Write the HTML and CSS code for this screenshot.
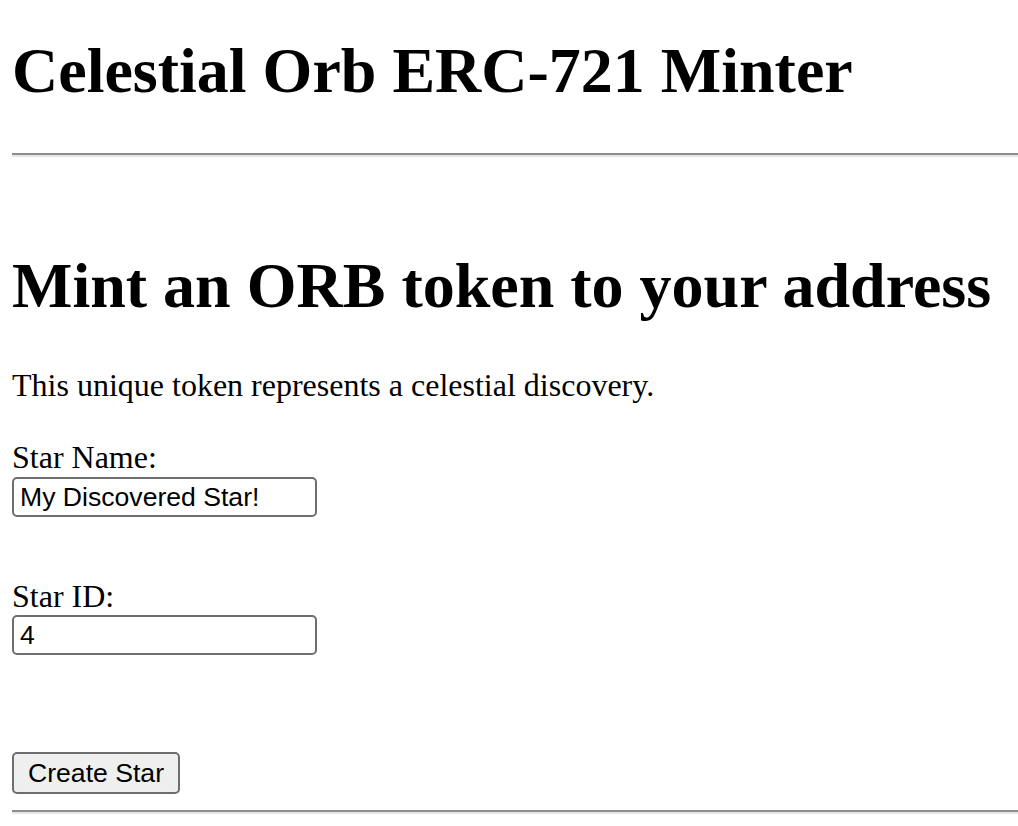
FILE: index.html
```html
<!DOCTYPE html>
<html lang="en">
<head>
<meta charset="utf-8">
<title>Celestial Orb ERC-721 Minter</title>
<link rel="stylesheet" href="styles.css">
</head>
<body class="page">
  <h1 class="title">Celestial Orb ERC-721 Minter</h1>
  <hr class="rule rule-top">
  <h1 class="heading">Mint an ORB token to your address</h1>
  <p class="lead">This unique token represents a celestial discovery.</p>
  <form class="mint-form">
    <div class="field field-name">
      <label class="field-label" for="starName">Star Name:</label>
      <input class="field-input" id="starName" type="text" value="My Discovered Star!">
    </div>
    <div class="field field-id">
      <label class="field-label" for="starId">Star ID:</label>
      <input class="field-input" id="starId" type="text" value="4">
    </div>
    <button class="create-btn" type="button">Create Star</button>
  </form>
  <hr class="rule rule-bottom">
</body>
</html>
```
FILE: styles.css
```css
html, body {
  margin: 0;
  padding: 0;
  background: #ffffff;
}

.page {
  padding-left: 12px;
  font-family: "Liberation Serif", "Times New Roman", serif;
  font-size: 32px;
  color: #000;
}

.title,
.heading {
  font-size: 64px;
  font-weight: bold;
  line-height: normal;
  margin: 0;
}

.title {
  margin-top: 34px;
}

.rule {
  display: block;
  height: 0;
  border: 0;
  border-top: 2px solid #8e8e8e;
  border-bottom: 2px solid #e6e6e6;
  margin: 0;
}

.rule-top {
  margin-top: 45px;
}

.heading {
  margin-top: 92px;
}

.lead {
  margin: 44px 0 0;
  line-height: normal;
}

.mint-form {
  margin: 0;
}

.field {
  display: flex;
  flex-direction: column;
  align-items: flex-start;
}

.field-name {
  margin-top: 35px;
}

.field-id {
  margin-top: 61px;
}

.field-label {
  line-height: normal;
  display: block;
  margin-bottom: 1px;
}

.field-input {
  box-sizing: border-box;
  width: 305px;
  height: 40px;
  margin: 0;
  padding: 2px 6px;
  border: 2px solid #6e6e6e;
  border-radius: 5px;
  font-family: "Liberation Sans", Arial, sans-serif;
  font-size: 26.6px;
  color: #000;
  background: #fff;
}

.field-id .field-input {
  margin-top: -1px;
}

.create-btn {
  display: block;
  box-sizing: border-box;
  margin-top: 97px;
  height: 42px;
  padding: 0 14px;
  border: 2px solid #6e6e6e;
  border-radius: 5px;
  background: #efefef;
  font-family: "Liberation Sans", Arial, sans-serif;
  font-size: 26.6px;
  color: #000;
}

.rule-bottom {
  margin-top: 16px;
}
```
